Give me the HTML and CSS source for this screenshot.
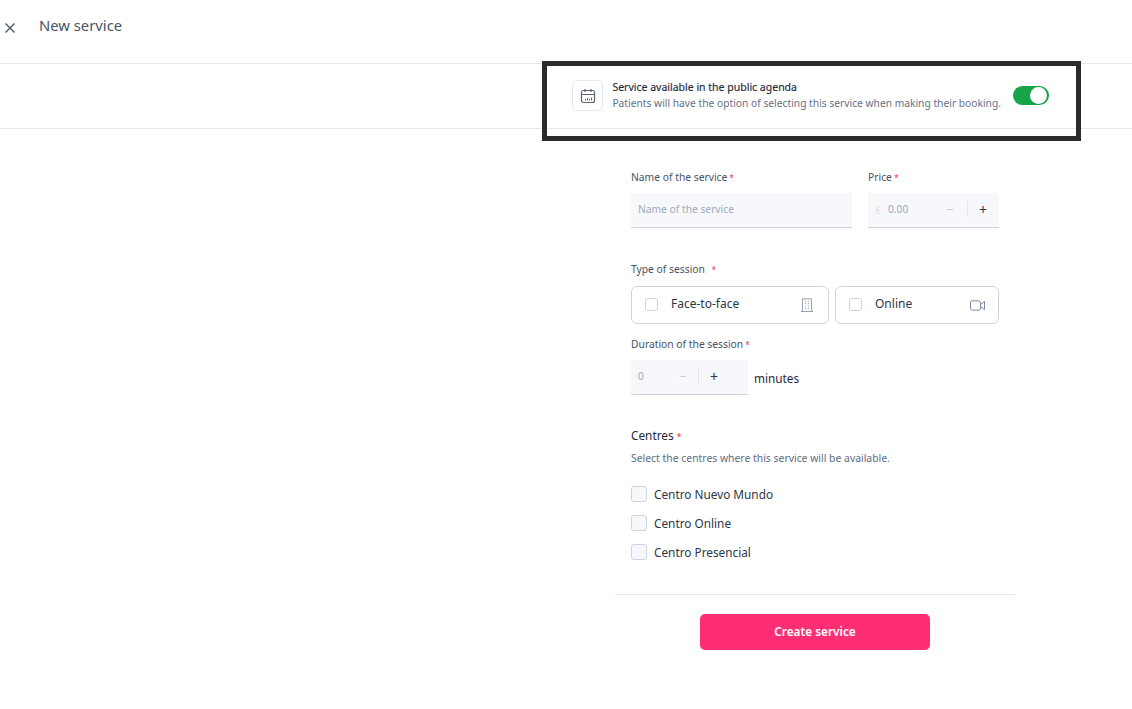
FILE: index.html
```html
<!DOCTYPE html>
<html lang="en">
<head>
<meta charset="utf-8">
<title>New service</title>
<link rel="stylesheet" href="styles.css">
</head>
<body>
<header class="topbar">
  <svg class="close" width="12" height="12" viewBox="0 0 12 12"><path d="M1.500 1.500l9 9M10.500 1.500l-9 9" stroke="#4a5568" stroke-width="1.400" fill="none"/></svg>
  <h1 class="title">New service</h1>
</header>
<section class="band">
  <div class="public">
    <div class="icon-box">
      <svg width="16" height="16" viewBox="0 0 16 16" fill="none" stroke="#5b6478" stroke-width="1.200"><rect x="1.500" y="2.500" width="13" height="12" rx="2"/><path d="M1.500 6.500h13M5 1v3M11 1v3"/><path d="M5.500 12.500v-1.500M7.500 12.500v-2.500M9.500 12.500v-1.500M11.500 12.500v-3" stroke-width="1"/></svg>
    </div>
    <div class="public-text">
      <div class="public-title">Service available in the public agenda</div>
      <div class="public-sub">Patients will have the option of selecting this service when making their booking.</div>
    </div>
    <div class="toggle"><span class="knob"></span></div>
  </div>
  <div class="highlight"></div>
</section>
<main class="form">
  <div class="row-top">
    <div class="field-name">
      <div class="label">Name of the service<span class="req">*</span></div>
      <div class="input"><span class="ph">Name of the service</span></div>
    </div>
    <div class="field-price">
      <div class="label">Price<span class="req">*</span></div>
      <div class="input stepper">
        <span class="euro">€</span><span class="ph val">0.00</span>
        <span class="minus">−</span><span class="sep"></span><span class="plus">+</span>
      </div>
    </div>
  </div>
  <div class="label type-label">Type of session <span class="req req-gap">*</span></div>
  <div class="types">
    <div class="type type-face">
      <span class="box"></span><span class="type-name">Face-to-face</span>
      <svg class="type-icon" width="12" height="14" viewBox="0 0 12 14" fill="none" stroke="#98a3b5" stroke-width="1"><path d="M1.500 13.500V.8h9v12.700M0 13.500h12"/><path d="M4 3h1M7 3h1M4 5.500h1M7 5.500h1M4 8h1M7 8h1M4 10.500h1M7 10.500h1"/></svg>
    </div>
    <div class="type type-online">
      <span class="box"></span><span class="type-name">Online</span>
      <svg class="type-icon" width="15" height="11" viewBox="0 0 15 11" fill="none" stroke="#7d889b" stroke-width="1"><rect x=".5" y=".8" width="10" height="9.400" rx="2"/><path d="M10.500 4.500l4-3v8l-4-3"/></svg>
    </div>
  </div>
  <div class="label duration-label">Duration of the session<span class="req">*</span></div>
  <div class="duration">
    <div class="input stepper dur-stepper">
      <span class="ph zero">0</span>
      <span class="minus">−</span><span class="sep"></span><span class="plus">+</span>
    </div>
    <span class="unit">minutes</span>
  </div>
  <div class="centres-title">Centres<span class="req req-title">*</span></div>
  <div class="centres-sub">Select the centres where this service will be available.</div>
  <div class="centres">
    <label class="centre"><span class="box box-lg"></span>Centro Nuevo Mundo</label>
    <label class="centre"><span class="box box-lg"></span>Centro Online</label>
    <label class="centre"><span class="box box-lg"></span>Centro Presencial</label>
  </div>
  <div class="footer">
    <button class="create" type="button">Create service</button>
  </div>
</main>
</body>
</html>
```
FILE: styles.css
```css
* { box-sizing: border-box; }
html, body { margin: 0; padding: 0; }
body {
  width: 1132px;
  height: 709px;
  overflow: hidden;
  background: #fff;
  font-family: "Noto Sans", sans-serif;
  color: #2d3648;
}
.topbar {
  height: 64px;
  border-bottom: 1px solid #e2e8f0;
  display: flex;
  align-items: flex-start;
  padding: 15px 0 0 4px;
}
.close { margin-top: 7px; }
.title {
  margin: 0 0 0 23px;
  font-size: 14.800px;
  line-height: 20px;
  font-weight: 400;
  color: #4a5568;
}
.band {
  position: relative;
  height: 65px;
  border-bottom: 1px solid #e2e8f0;
  display: flex;
  justify-content: flex-end;
  padding: 16px 83px 0 0;
}
.public { display: flex; align-items: flex-start; height: 32px; }
.icon-box {
  width: 31px;
  height: 31px;
  border: 1px solid #e2e8f0;
  border-radius: 6px;
  display: flex;
  align-items: center;
  justify-content: center;
}
.public-text { margin-left: 9px; }
.public-title { font-size: 10.500px; line-height: 15px; color: #1f2a3c; -webkit-text-stroke: 0.15px #1f2a3c; }
.public-sub { font-size: 10.260px; line-height: 15px; color: #667085; margin-top: 1px; white-space: nowrap; }
.toggle {
  width: 36px;
  height: 19px;
  margin: 6px 0 0 12px;
  border-radius: 10px;
  background: #16a34a;
  position: relative;
}
.knob {
  position: absolute;
  right: 2px;
  top: 1px;
  width: 17px;
  height: 17px;
  border-radius: 50%;
  background: #fff;
}
.highlight {
  position: absolute;
  left: 542px;
  top: -3px;
  width: 539px;
  height: 80px;
  border: 5px solid #2b2b2b;
  pointer-events: none;
}
.form {
  width: 368px;
  margin-left: 631px;
  padding-top: 40px;
  position: relative;
}
.label { font-size: 10.300px; line-height: 16px; color: #475266; }
.req { color: #e8325f; margin-left: 2px; font-size: 8.500px; line-height: 0; }
.req-gap { margin-left: 4px; }
.req-title { margin-left: 3px; font-size: 9.500px; }
.row-top { display: flex; gap: 16px; }
.field-name { width: 221px; }
.field-price { width: 131px; }
.input {
  height: 35px;
  margin-top: 8px;
  background: #f7f8fb;
  border-bottom: 1px solid #cbd2dd;
  display: flex;
  align-items: center;
  padding: 0 0 2px 7px;
  font-size: 10.250px;
}
.ph { color: #a0a8b6; }
.euro { color: #dfe3ea; font-size: 11px; width: 13px; }
.val { width: 58px; }
.minus { color: #c8ced8; font-size: 13px; width: 21px; }
.sep { width: 1px; height: 16px; background: #e2e6ec; }
.plus { color: #2d3648; font-size: 14px; margin-left: 11px; }
.type-label { margin-top: 33px; }
.types { display: flex; gap: 6px; margin-top: 9px; }
.type {
  height: 38px;
  border: 1px solid #cbd5e1;
  border-radius: 6px;
  display: flex;
  align-items: center;
  padding: 0 0 2px 13px;
  font-size: 12px;
  color: #2d3648;
}
.type-face { width: 198px; }
.type-online { width: 164px; }
.box {
  width: 13px;
  height: 13px;
  border: 1px solid #cbd5e1;
  border-radius: 3px;
  flex: none;
  background: #fff;
}
.type-name { margin: 0 0 2px 13px; }
.type-icon { margin: 2px 15px 0 auto; }
.type-online .type-icon { margin-right: 13px; }
.duration-label { margin-top: 12px; }
.duration { display: flex; align-items: center; gap: 6px; margin-top: 8px; }
.dur-stepper { width: 117px; margin-top: 0; padding-left: 7px; }
.zero { width: 41px; }
.dur-stepper .minus { width: 19px; }
.unit { font-size: 11.750px; color: #1f2a3c; }
.centres-title { margin-top: 32px; font-size: 11.800px; line-height: 17px; color: #1f2a3c; }
.centres-sub { margin-top: 6px; font-size: 10.400px; line-height: 16px; color: #5f6b80; }
.centres { margin-top: 20px; display: flex; flex-direction: column; gap: 13px; }
.centre {
  display: flex;
  align-items: center;
  gap: 7px;
  height: 16px;
  font-size: 11.800px;
  color: #2d3648;
}
.box-lg { width: 16px; height: 16px; background: #f7f8fb; }
.footer {
  margin: 34px 0 0 -16px;
  width: 400px;
  border-top: 1px solid #e2e8f0;
  padding-top: 19px;
  display: flex;
  justify-content: center;
}
.create {
  width: 230px;
  height: 36px;
  border: 0;
  border-radius: 5px;
  background: #ff2e74;
  color: #fff;
  font-family: inherit;
  font-size: 11.800px;
  font-weight: 600;
  padding: 0 0 3px;
}
```
